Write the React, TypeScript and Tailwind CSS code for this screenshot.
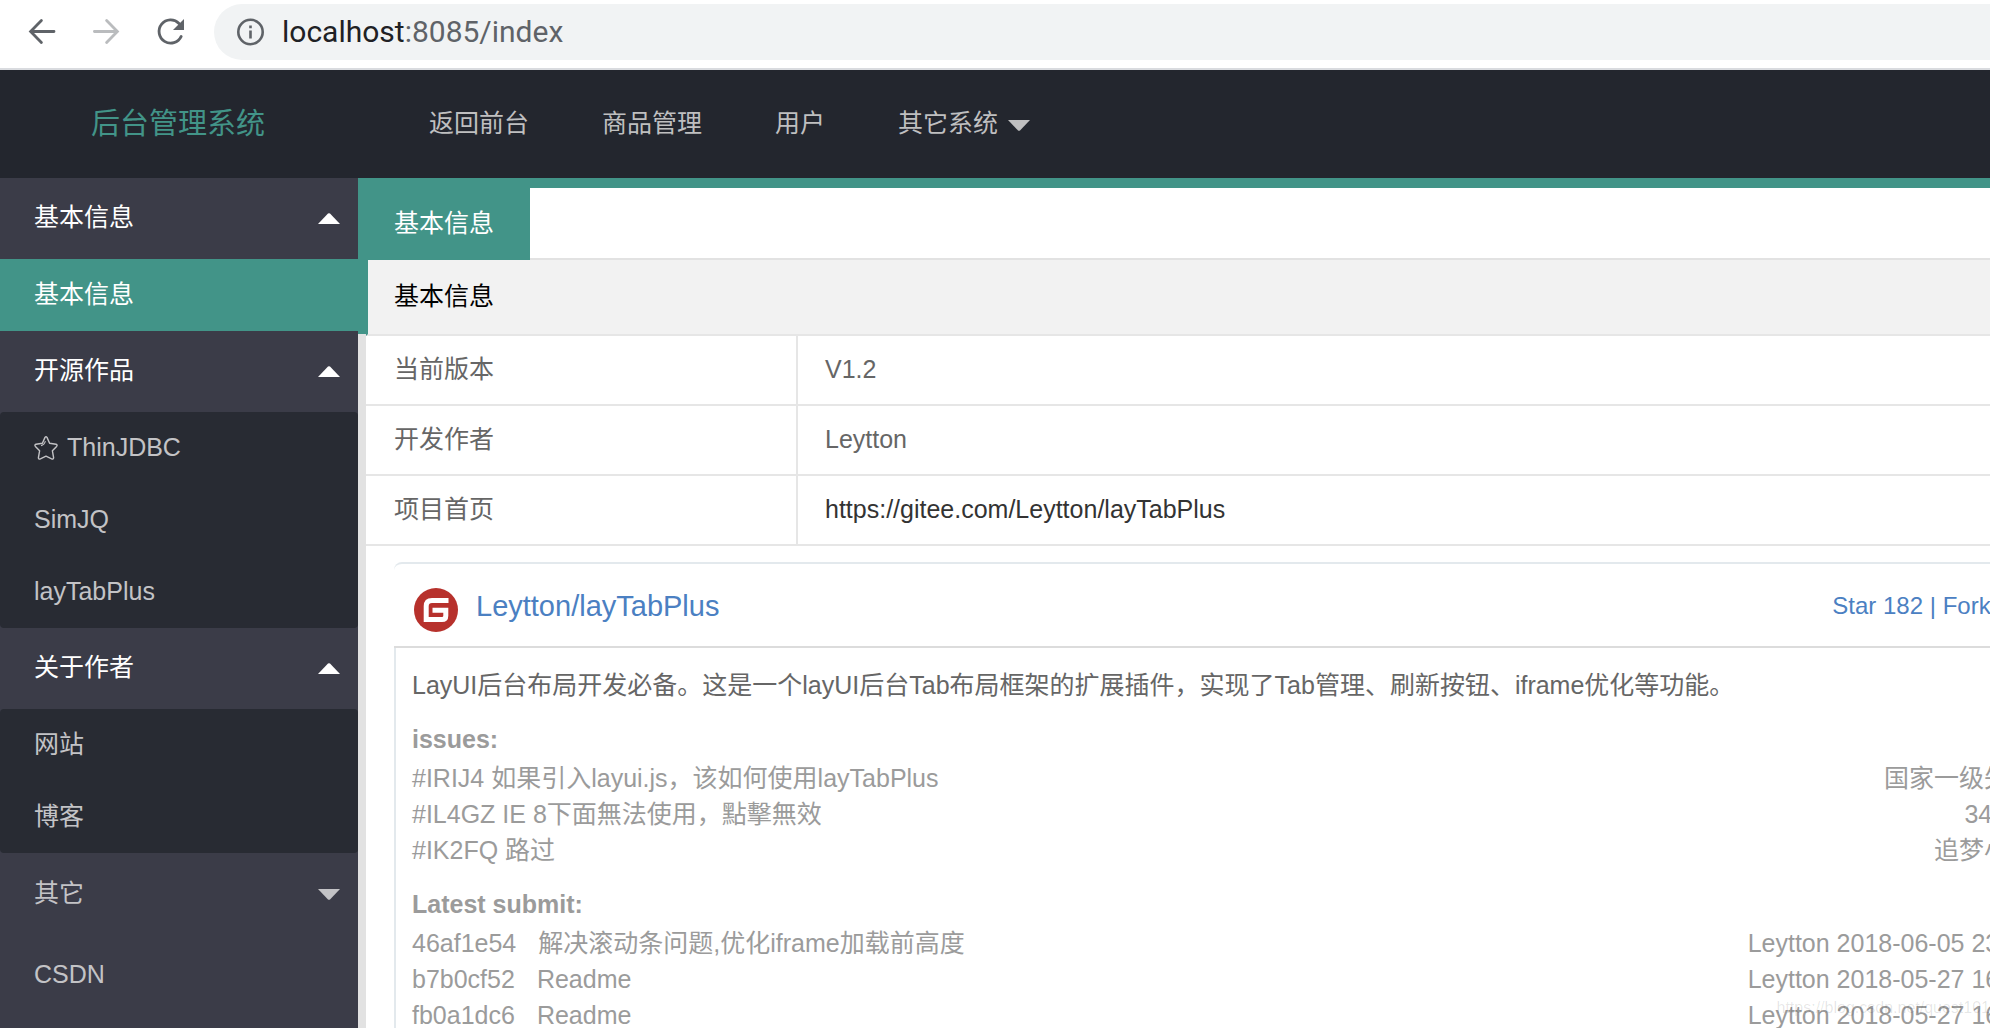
import { ReactNode } from 'react';

type NavItem = { label: string; star?: boolean; active?: boolean };
type NavGroup = { title: string; open?: boolean; arrow?: boolean; items?: NavItem[] };

const navGroups: NavGroup[] = [
  { title: '基本信息', open: true, arrow: true, items: [{ label: '基本信息', active: true }] },
  {
    title: '开源作品',
    open: true,
    arrow: true,
    items: [{ label: 'ThinJDBC', star: true }, { label: 'SimJQ' }, { label: 'layTabPlus' }],
  },
  { title: '关于作者', open: true, arrow: true, items: [{ label: '网站' }, { label: '博客' }] },
  { title: '其它', arrow: true },
  { title: 'CSDN' },
];

const issues = [
  { text: '#IRIJ4 如果引入layui.js，该如何使用layTabPlus', user: '国家一级失眠' },
  { text: '#IL4GZ IE 8下面無法使用，點擊無效', user: '34936' },
  { text: '#IK2FQ 路过', user: '追梦小子' },
];

const commits = [
  { id: '46af1e54', text: '解决滚动条问题,优化iframe加载前高度', by: 'Leytton 2018-06-05 23:10' },
  { id: 'b7b0cf52', text: 'Readme', by: 'Leytton 2018-05-27 16:41' },
  { id: 'fb0a1dc6', text: 'Readme', by: 'Leytton 2018-05-27 16:38' },
];

function Caret({ up = false }: { up?: boolean }) {
  return (
    <svg className="mt-[2px] h-[11px] w-[22px] shrink-0" viewBox="0 0 22 11" fill="currentColor" aria-hidden="true">
      {up ? <path d="M0 11L10 0.6Q11 0 12 0.6L22 11Z" /> : <path d="M0 0L10 10.4Q11 11 12 10.4L22 0Z" />}
    </svg>
  );
}

function Star() {
  return (
    <svg className="mr-[9px] h-6 w-6 shrink-0" viewBox="0 0 24 24" fill="none" stroke="currentColor" strokeWidth="1.4" strokeLinejoin="round" aria-hidden="true">
      <path d="M11 1.4Q12 0 13 1.4L15.6 7.2L22 8.2Q23.8 8.9 22.6 10.4L18.4 14.8L19.6 21.6Q19.4 23.6 17.6 22.9L12 20.2L6.4 22.9Q4.6 23.6 4.4 21.6L5.6 14.8L1.4 10.4Q0.2 8.9 2 8.2L8.4 7.2Z" />
      <path d="M11.4 5.2Q10.4 9 7 9.6" strokeWidth="1.1" />
    </svg>
  );
}

function GiteeLogo() {
  return (
    <svg className="mt-2 h-11 w-11 shrink-0" viewBox="0 0 44 44" aria-hidden="true">
      <circle cx="22" cy="22" r="22" fill="#b7312c" />
      <path
        fill="none"
        stroke="#fff"
        strokeWidth="5"
        d="M34.5 12.4H18Q12.2 12.4 12.2 18.2V31.6H28Q31.8 31.6 31.8 27.8V22.2H18.5"
      />
    </svg>
  );
}

function BrowserBar() {
  return (
    <div className="flex h-[70px] shrink-0 items-center border-b-2 border-[#d9dbdf] bg-white pb-1 text-[#5f6368]">
      <button aria-label="Back" className="ml-7 h-8 w-8">
        <svg className="h-8 w-8" viewBox="0 0 32 32" fill="none" stroke="currentColor" strokeWidth="2.8" strokeLinecap="round">
          <path d="M26 15.5H3M13.4 4.5L2.6 15.5L13.4 26.5" />
        </svg>
      </button>
      <button aria-label="Forward" className="ml-8 h-8 w-8 text-[#babcbe]">
        <svg className="h-8 w-8" viewBox="0 0 32 32" fill="none" stroke="currentColor" strokeWidth="2.8" strokeLinecap="round">
          <path d="M2.4 15.5H25M14.6 4.5L25.4 15.5L14.6 26.5" />
        </svg>
      </button>
      <button aria-label="Reload" className="ml-[30px] h-8 w-8">
        <svg className="h-8 w-8" viewBox="0 0 32 32" fill="none" stroke="currentColor" strokeWidth="2.8" strokeLinecap="round">
          <path d="M25 7.4A11.6 11.6 0 1 0 27.2 20.4" />
          <path d="M30 3V14H19Z" fill="currentColor" stroke="none" />
        </svg>
      </button>
      <div className="ml-7 flex h-14 flex-1 items-center rounded-l-full bg-[#f1f3f4] pl-[23px]">
        <svg className="mr-[17px] h-7 w-7 shrink-0" viewBox="0 0 28 28" fill="none" stroke="currentColor" strokeWidth="2.6" aria-hidden="true">
          <circle cx="13.5" cy="14" r="12.2" />
          <path d="M13.5 12.4V20.6M13.5 7.4V10.2" />
        </svg>
        <div className="font-[Roboto,sans-serif] text-[30px] leading-9">
          <span className="text-[#202124]">localhost</span>:8085/index
        </div>
      </div>
    </div>
  );
}

function TopNav() {
  return (
    <header className="flex h-[108px] shrink-0 items-center bg-[#23262e] text-[#bfbfc0]">
      <div className="w-[356px] shrink-0 pt-[2px] text-center text-[29px] text-[#429488]">后台管理系统</div>
      <nav className="flex gap-[73px] pl-[73px]">
        <a href="#front">返回前台</a>
        <a href="#goods">商品管理</a>
        <a href="#users">用户</a>
        <a href="#others" className="flex items-center gap-[10px]">
          其它系统
          <Caret />
        </a>
      </nav>
    </header>
  );
}

function Sidebar() {
  return (
    <aside className="w-[358px] shrink-0 bg-[#3b3c48] text-[#c3c3c6]">
      {navGroups.map((group) => (
        <div key={group.title}>
          <button
            className={
              group.open
                ? 'flex h-[81px] w-full items-center justify-between pr-[18px] pb-[2px] pl-[34px] text-white'
                : 'flex h-[81px] w-full items-center justify-between pr-[18px] pl-[34px]'
            }
          >
            {group.title}
            {group.arrow && <Caret up={group.open} />}
          </button>
          {group.items && (
            <ul className="rounded-sm bg-[#282b33]">
              {group.items.map((item) => (
                <li key={item.label}>
                  <a
                    href="#page"
                    className={
                      item.active
                        ? 'flex h-[72px] items-center bg-[#429488] pl-[34px] text-white'
                        : 'flex h-[72px] items-center pl-[34px]'
                    }
                  >
                    {item.star && <Star />}
                    {item.label}
                  </a>
                </li>
              ))}
            </ul>
          )}
        </div>
      ))}
    </aside>
  );
}

function InfoRow({ name, children }: { name: string; children: ReactNode }) {
  return (
    <tr className="h-[70px]">
      <td className="w-[432px] border-r-2 border-b-2 border-[#e6e6e6] pl-7">{name}</td>
      <td className="border-b-2 border-[#e6e6e6] pl-[27px]">{children}</td>
    </tr>
  );
}

function GiteeCard() {
  // the widget is wider than its frame, so its right edge runs out of view
  return (
    <section className="mt-4 -mr-11 ml-7">
      <div className="flex h-[86px] items-center rounded-tl-lg border-t-2 border-b-2 border-t-[#e3e9ed] border-b-[#dcdcdc] pt-[2px] pl-5 text-[#4b80c2]">
        <GiteeLogo />
        <a href="#repo" className="ml-[18px] text-[29px] leading-9">Leytton/layTabPlus</a>
        <div className="ml-auto pr-[10px] text-[24px] whitespace-nowrap">
          <a href="#star">Star 182</a> | <a href="#fork">Fork 64</a>
        </div>
      </div>
      <div className="border-l-2 border-[#e3e9ed] pt-[19px] pl-4 leading-9 text-[#9b9b9b]">
        <p className="text-[#666]">
          LayUI后台布局开发必备。这是一个layUI后台Tab布局框架的扩展插件，实现了Tab管理、刷新按钮、iframe优化等功能。
        </p>
        <h3 className="mt-[18px] mb-[3px] font-bold">issues:</h3>
        <ul>
          {issues.map((issue) => (
            <li key={issue.text} className="flex justify-between">
              <span>{issue.text}</span>
              <span className="whitespace-nowrap">{issue.user}</span>
            </li>
          ))}
        </ul>
        <h3 className="mt-[18px] mb-[3px] font-bold">Latest submit:</h3>
        <ul>
          {commits.map((commit) => (
            <li key={commit.id} className="flex">
              <span>{commit.id}</span>
              <span className="ml-[22px] flex-1">{commit.text}</span>
              <span className="whitespace-nowrap">{commit.by}</span>
            </li>
          ))}
        </ul>
      </div>
    </section>
  );
}

export default function App() {
  return (
    <div className="relative flex h-screen flex-col overflow-hidden bg-white font-['Liberation_Sans','Noto_Sans_CJK_SC',sans-serif] text-[25px] text-[#666]">
      <BrowserBar />
      <TopNav />
      <div className="flex min-h-0 flex-1">
        <Sidebar />
        <div className="w-2 shrink-0 bg-[#e2e2e2]">
          <div className="h-[156px] bg-[#429488]" />
        </div>
        <main className="min-w-0 flex-1 overflow-hidden">
          <div className="h-[10px] bg-[#429488]" />
          <div className="flex h-[72px] border-b-2 border-[#e2e2e2]">
            <button className="-mb-[2px] w-[164px] bg-[#429488] pl-7 text-left text-white">基本信息</button>
          </div>
          <table className="w-full border-separate border-spacing-0">
            <thead>
              <tr className="h-[76px]">
                <th
                  colSpan={2}
                  className="border-b-2 border-l-2 border-b-[#e6e6e6] border-l-[#429488] bg-[#f2f2f2] pl-[26px] text-left font-normal text-black"
                >
                  基本信息
                </th>
              </tr>
            </thead>
            <tbody>
              <InfoRow name="当前版本">V1.2</InfoRow>
              <InfoRow name="开发作者">Leytton</InfoRow>
              <InfoRow name="项目首页">
                <a href="#home" className="text-[#333]">https://gitee.com/Leytton/layTabPlus</a>
              </InfoRow>
            </tbody>
          </table>
          <GiteeCard />
        </main>
      </div>
      <div className="pointer-events-none absolute right-0 bottom-2 text-[16px] leading-6 text-black/10">
        https://blog.csdn.net/quest101
      </div>
    </div>
  );
}
